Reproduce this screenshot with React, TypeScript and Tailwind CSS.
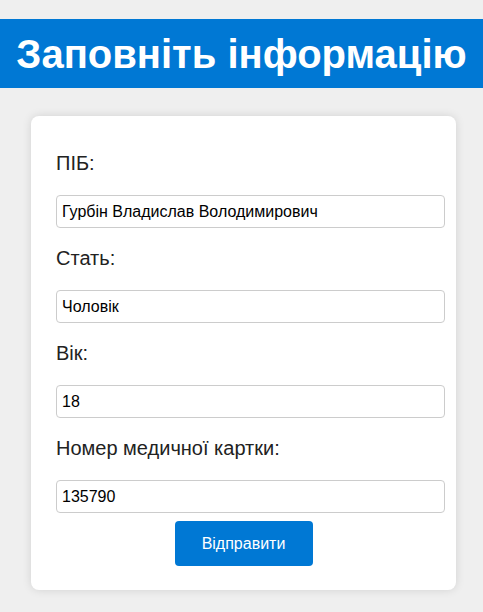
import React from 'react';

const fields = [
  { label: 'ПІБ:', value: 'Гурбін Владислав Володимирович' },
  { label: 'Стать:', value: 'Чоловік' },
  { label: 'Вік:', value: '18' },
  { label: 'Номер медичної картки:', value: '135790' },
];

export default function App() {
  return (
    <div className="min-h-[612px] bg-[#efefef] pt-[19px] font-['Liberation_Sans',Arial,sans-serif]">
      {/* Header */}
      <div className="h-[69px] bg-[#0078d4] flex items-center justify-center">
        <h1 className="text-[40px] font-bold text-white leading-none">Заповніть інформацію</h1>
      </div>

      {/* Card */}
      <div className="mx-[31px] mt-[28px] w-[425px] bg-white rounded-lg shadow-[0_0_10px_rgba(0,0,0,0.12)] px-[25px] pt-[36px] pb-[24px]">
        <form className="flex flex-col" onSubmit={e => e.preventDefault()}>
          {fields.map((f, i) => (
            <div key={i} className={i < fields.length - 1 ? 'flex flex-col mb-[19px]' : 'flex flex-col'}>
              <label className="text-[20px] leading-[23px] text-[#222] mb-[20px]">{f.label}</label>
              <input
                defaultValue={f.value}
                className="h-[33px] w-[389px] border border-[#cccccc] rounded-[4px] px-[5px] text-[16px] text-black outline-none"
              />
            </div>
          ))}
          <div className="flex justify-center mt-[8px]">
            <button
              type="submit"
              className="w-[138px] h-[45px] bg-[#0078d4] text-white text-[16px] rounded-[4px]"
            >
              Відправити
            </button>
          </div>
        </form>
      </div>
    </div>
  );
}
